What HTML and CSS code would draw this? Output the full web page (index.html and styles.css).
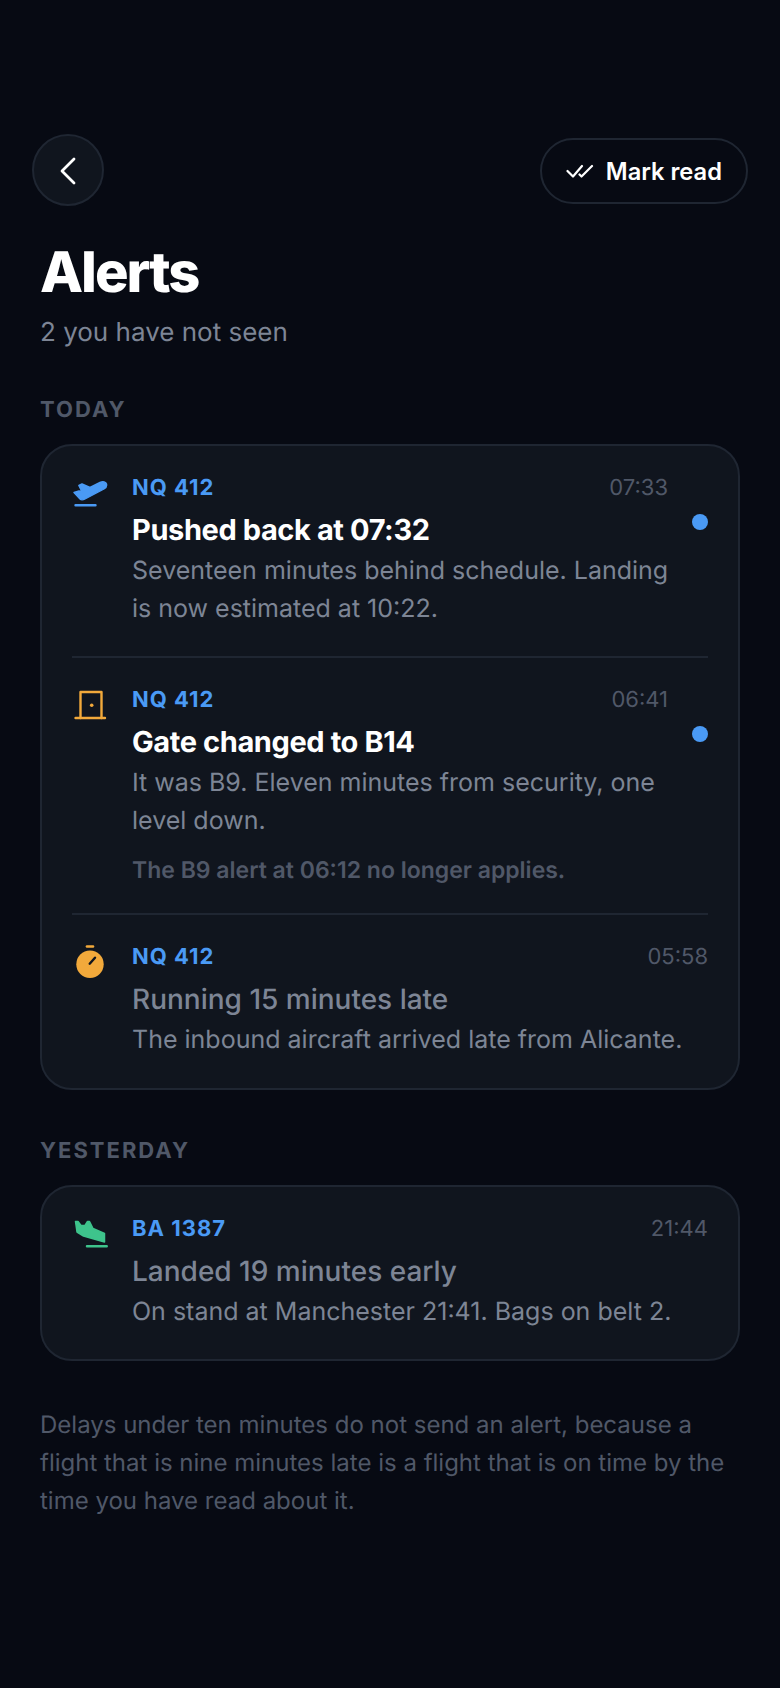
FILE: index.html
```html
<!DOCTYPE html>
<html lang="en">
<head>
    <meta charset="UTF-8">
    <meta name="viewport" content="width=device-width, initial-scale=1.0">
    <title>Alerts</title>
    <link rel="stylesheet" href="styles.css">
</head>
<body>
    <div class="screen">
        <div class="topbar">
            <button class="back">
                <svg width="36" height="36" viewBox="0 0 36 36" fill="none" stroke="#fff" stroke-width="2.800" stroke-linecap="round" stroke-linejoin="round"><path d="M24 7 L12 19 L24 31"/></svg>
            </button>
            <button class="mark">
                <svg width="28" height="14" viewBox="0 0 28 14" fill="none" stroke="#fff" stroke-width="2.200" stroke-linecap="round" stroke-linejoin="round"><path d="M1.500 7 L7 12.500 L16 2"/><path d="M13.500 10.500 L15.500 12.500 L26 2"/></svg>
                Mark read
            </button>
        </div>

        <h1>Alerts</h1>
        <p class="sub">2 you have not seen</p>

        <h2 class="day">TODAY</h2>
        <div class="card">
            <div class="row">
                <div class="icon">
                    <svg width="36" height="36" viewBox="0 0 36 36" fill="#4a9af5" stroke="#4a9af5" stroke-width="1.400" stroke-linejoin="round"><path d="M2 19.500 L7 18 L10 18.700 L6.800 12.500 L10 11 L18 14.500 L28 9.500 C31 8 34 9 34.500 11 C35 13 34 14.800 32 16 L13 26 C11 27 9 27 8 26 Z"/><rect x="3" y="31.700" width="21" height="1" rx="0.500"/></svg>
                </div>
                <div class="main">
                    <div class="meta"><span class="flight">NQ 412</span><span class="time">07:33</span></div>
                    <div class="head new">Pushed back at 07:32</div>
                    <p class="body">Seventeen minutes behind schedule. Landing is now estimated at 10:22.</p>
                </div>
                <span class="dot"></span>
            </div>
            <div class="row">
                <div class="icon">
                    <svg width="36" height="36" viewBox="0 0 36 36" fill="none" stroke="#f2a93b" stroke-width="2.400" stroke-linecap="round" stroke-linejoin="round"><path d="M3.500 33 H33"/><path d="M8.500 33 V7 H29.500 V33"/><circle cx="19.700" cy="20.300" r="1.800" fill="#f2a93b" stroke="none"/></svg>
                </div>
                <div class="main">
                    <div class="meta"><span class="flight">NQ 412</span><span class="time">06:41</span></div>
                    <div class="head new">Gate changed to B14</div>
                    <p class="body">It was B9. Eleven minutes from security, one level down.</p>
                    <p class="note">The B9 alert at 06:12 no longer applies.</p>
                </div>
                <span class="dot"></span>
            </div>
            <div class="row">
                <div class="icon">
                    <svg width="36" height="36" viewBox="0 0 36 36"><rect x="13.700" y="3.300" width="8.600" height="2.400" rx="1.200" fill="#f2a93b"/><circle cx="18" cy="22.300" r="13.700" fill="#f2a93b"/><path d="M17.700 21.700 L23 15.700" stroke="#10151e" stroke-width="2.400" stroke-linecap="round"/></svg>
                </div>
                <div class="main">
                    <div class="meta"><span class="flight">NQ 412</span><span class="time">05:58</span></div>
                    <div class="head">Running 15 minutes late</div>
                    <p class="body">The inbound aircraft arrived late from Alicante.</p>
                </div>
            </div>
        </div>

        <h2 class="day">YESTERDAY</h2>
        <div class="card">
            <div class="row">
                <div class="icon">
                    <svg width="36" height="36" viewBox="0 0 36 36" fill="#3ec48c" stroke="#3ec48c" stroke-width="1.500" stroke-linejoin="round"><path d="M3.500 7.500 L6 7.500 L9 11.500 L13 11.500 L15.500 7.500 L17.500 7.500 L21 14.500 L32.500 19.500 L32.500 28 L11.500 22 L5 18 Z"/><rect x="14.500" y="31.800" width="20.700" height="1" rx="0.500"/></svg>
                </div>
                <div class="main">
                    <div class="meta"><span class="flight">BA 1387</span><span class="time">21:44</span></div>
                    <div class="head">Landed 19 minutes early</div>
                    <p class="body">On stand at Manchester 21:41. Bags on belt 2.</p>
                </div>
            </div>
        </div>

        <p class="foot">Delays under ten minutes do not send an alert, because a flight that is nine minutes late is a flight that is on time by the time you have read about it.</p>
    </div>
</body>
</html>
```

FILE: styles.css
```css
* {
    box-sizing: border-box;
}

body {
    margin: 0;
    background: #070a13;
    font-family: "Inter", "Liberation Sans", sans-serif;
    color: #fff;
    text-rendering: geometricPrecision;
}

.screen {
    min-height: 1688px;
    padding: 134px 40px 0;
}

.topbar {
    display: flex;
    justify-content: space-between;
    align-items: center;
    margin: 0 -8px;
}

button {
    font-family: inherit;
    color: #fff;
}

.back {
    width: 72px;
    height: 72px;
    padding: 0;
    display: flex;
    align-items: center;
    justify-content: center;
    border: 2px solid #1f2632;
    border-radius: 50%;
    background: #10151e;
}

.mark {
    height: 66px;
    margin-top: 2px;
    padding: 0 24px;
    display: flex;
    align-items: center;
    gap: 12px;
    border: 2px solid #1f2632;
    border-radius: 33px;
    background: transparent;
    font-size: 23.700px;
    font-weight: 600;
}

h1 {
    margin: 34px 0 0;
    font-size: 56px;
    line-height: 64px;
    font-weight: 800;
    letter-spacing: -2px;
}

.sub {
    margin: 11px 0 0;
    font-size: 26px;
    line-height: 36px;
    color: #7d8595;
}

.day {
    margin: 44px 0 0;
    font-size: 22px;
    line-height: 30px;
    font-weight: 700;
    letter-spacing: 2px;
    color: #505868;
}

.card + .day {
    margin-top: 46px;
}

.day + .card {
    margin-top: 19px;
}

.card {
    padding: 0 30px;
    border: 2px solid #1f2632;
    border-radius: 32px;
    background: #10151e;
}

.row {
    display: flex;
    gap: 24px;
    padding: 27px 0 28px;
    border-top: 2px solid #1f2632;
}

.row:first-child {
    border-top: 0;
}

.icon {
    width: 36px;
    flex: none;
}

.main {
    flex: 1;
    min-width: 0;
}

.meta {
    display: flex;
    justify-content: space-between;
    align-items: center;
    line-height: 30px;
}

.flight {
    font-size: 22px;
    font-weight: 700;
    letter-spacing: 1px;
    color: #4a9af5;
}

.time {
    font-size: 22px;
    color: #505868;
}

.head {
    margin-top: 8px;
    font-size: 28px;
    line-height: 38px;
    font-weight: 500;
    color: #7d8595;
}

.head.new {
    font-size: 29px;
    font-weight: 700;
    letter-spacing: -0.4px;
    color: #fff;
}

.body {
    margin: 4px -4px 0 0;
    font-size: 25px;
    line-height: 37.500px;
    color: #7d8595;
}

.note {
    margin: 15px 0 0;
    font-size: 23px;
    line-height: 30px;
    font-weight: 600;
    color: #505868;
}

.dot {
    flex: none;
    width: 16px;
    height: 16px;
    margin-top: 41px;
    border-radius: 50%;
    background: #4a9af5;
}

.foot {
    margin: 45px 0 0;
    font-size: 24px;
    line-height: 38px;
    color: #505868;
}
```
